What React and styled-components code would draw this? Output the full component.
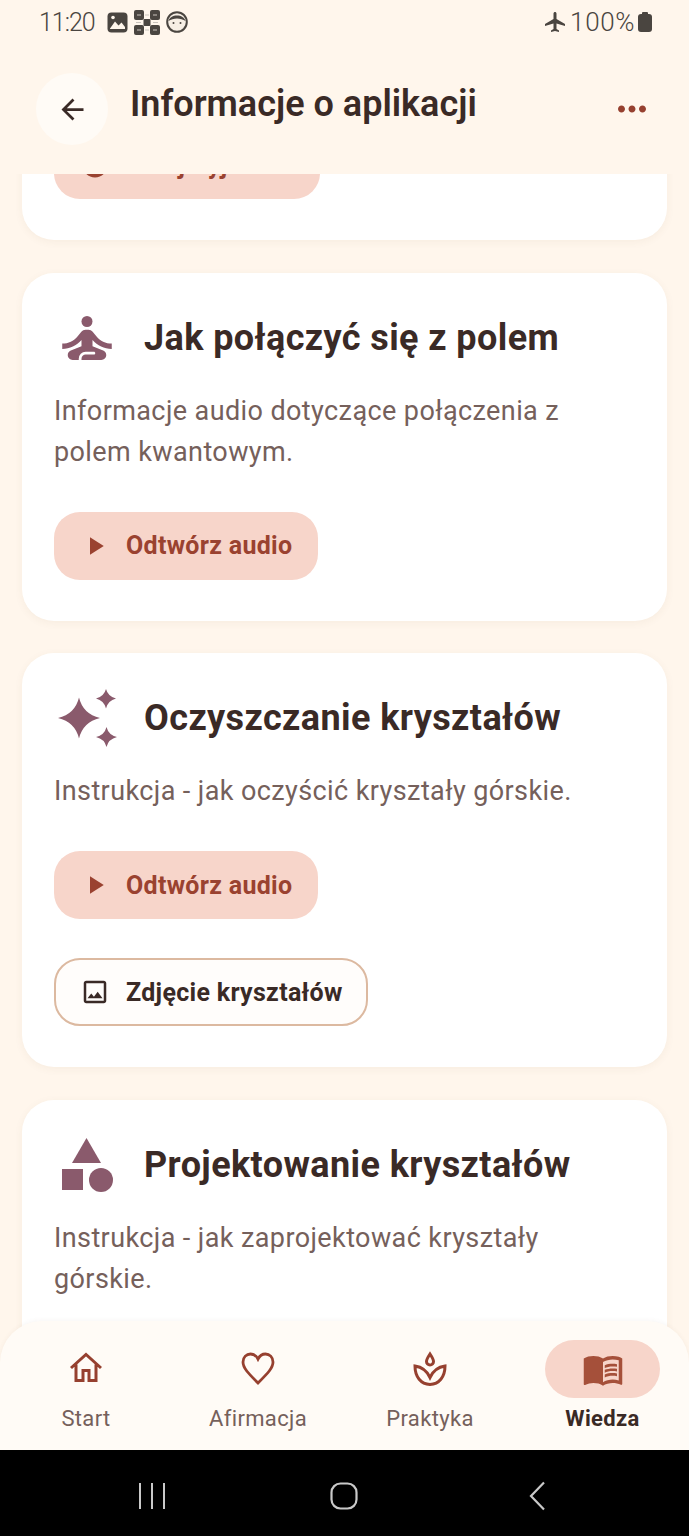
import React from "react";
import styled, { createGlobalStyle } from "styled-components";
import {
  MdArrowBack,
  MdMoreHoriz,
  MdPlayArrow,
  MdOutlineImage,
  MdSelfImprovement,
  MdMenuBook,
  MdLocalAirport,
  MdPlayCircle,
} from "react-icons/md";

const GlobalStyle = createGlobalStyle`
  html, body {
    margin: 0;
    padding: 0;
    background: #fff6ec;
    font-family: Roboto, "Liberation Sans", sans-serif;
  }
  * {
    box-sizing: border-box;
  }
`;

const Screen = styled.div`
  width: 689px;
  height: 1536px;
  display: flex;
  flex-direction: column;
  overflow: hidden;
  background: #fff6ec;
`;

const StatusBar = styled.div`
  height: 44px;
  flex: none;
  padding: 0 37px 0 39px;
  display: flex;
  align-items: center;
  justify-content: space-between;
  color: #4a4540;
  font-size: 25px;
  font-weight: 300;
`;

const StatusGroup = styled.div`
  display: flex;
  align-items: center;
  gap: ${(props) => props.$gap || 6}px;
`;

const Clock = styled.span`
  letter-spacing: -1px;
  margin-right: 6px;
`;

const Percent = styled.span`
  font-size: 26px;
  letter-spacing: 0.6px;
`;

const AppBar = styled.div`
  height: 130px;
  flex: none;
  padding: 29px 36px 0;
  display: flex;
  align-items: flex-start;
`;

const BackButton = styled.div`
  width: 72px;
  height: 72px;
  border-radius: 50%;
  background: #fffbf6;
  display: flex;
  align-items: center;
  justify-content: center;
  color: #3a2a26;
  font-size: 33px;
`;

const PageTitle = styled.div`
  margin: 8px 0 0 22px;
  flex: 1;
  font-size: 36px;
  line-height: 46px;
  font-weight: 600;
  color: #3a2a26;
`;

const MoreButton = styled.div`
  margin: 15px 0 0;
  display: flex;
  color: #96402f;
  font-size: 42px;
`;

const Feed = styled.div`
  flex: 1;
  min-height: 0;
  overflow: hidden;
`;

const CardList = styled.div`
  margin-top: -75px;
  padding: 0 22px;
  display: flex;
  flex-direction: column;
  gap: 32.5px;
`;

const Card = styled.div`
  background: #fff;
  border-radius: 32px;
  padding: 32px 32px ${(props) => props.$bottom || 41}px;
  box-shadow: 0 2px 8px rgba(120, 80, 50, 0.06);
  display: flex;
  flex-direction: column;
  align-items: flex-start;
`;

const CardHead = styled.div`
  display: flex;
  align-items: center;
  gap: 24px;
  height: 66px;
`;

const CardIcon = styled.div`
  width: 66px;
  height: 66px;
  display: flex;
  align-items: center;
  justify-content: center;
  color: #8a5a6c;
  font-size: 66px;
`;

const CardTitle = styled.div`
  font-size: 36px;
  font-weight: 700;
  letter-spacing: 0.4px;
  color: #3a2a26;
`;

const CardText = styled.div`
  margin-top: 20px;
  font-size: 27px;
  line-height: 41px;
  letter-spacing: 0.4px;
  color: #75605b;
`;

const ActionButton = styled.div`
  margin-top: ${(props) => props.$top ?? 39}px;
  height: 68px;
  width: ${(props) => props.$width}px;
  padding-left: ${(props) => (props.$outlined ? 24 : 26)}px;
  display: flex;
  align-items: center;
  gap: 16px;
  border-radius: 26px;
  font-size: 25px;
  font-weight: 700;
  letter-spacing: 0.3px;
  color: ${(props) => (props.$outlined ? "#3a2a26" : "#9a4230")};
  background: ${(props) => (props.$outlined ? "#fffdfb" : "#f7d5ca")};
  border: ${(props) => (props.$outlined ? "2px solid #dcb9a0" : "none")};
`;

const ButtonIcon = styled.span`
  display: flex;
  font-size: 30px;
`;

const BottomNav = styled.div`
  position: relative;
  z-index: 1;
  flex: none;
  height: 129px;
  margin-top: -42px;
  padding-top: 19px;
  border-radius: 42px 42px 0 0;
  background: #fffbf6;
  box-shadow: 0 -1px 4px rgba(120, 80, 50, 0.05);
  display: grid;
  grid-template-columns: 172px 172px 172px 1fr;
`;

const NavItem = styled.div`
  display: flex;
  flex-direction: column;
  align-items: center;
  font-size: 22px;
  letter-spacing: 0.35px;
  font-weight: ${(props) => (props.$active ? 700 : 400)};
  color: ${(props) => (props.$active ? "#3a2a26" : "#75605b")};
`;

const NavPill = styled.div`
  width: 115px;
  height: 58px;
  border-radius: 29px;
  display: flex;
  align-items: center;
  justify-content: center;
  color: ${(props) => (props.$active ? "#a5503a" : "#96402f")};
  font-size: 42px;
  background: ${(props) => (props.$active ? "#f7d5ca" : "transparent")};
`;

const NavLabel = styled.div`
  margin-top: 8px;
  line-height: 26px;
`;

const SystemBar = styled.div`
  height: 86px;
  flex: none;
  background: #000;
  display: grid;
  grid-template-columns: 1fr 1fr 1fr;
  align-items: center;
  justify-items: center;
  padding: 5px 56px 0;
`;

const SparkleIcon = () => (
  <svg width="59" height="58" viewBox="0 0 59 58" fill="currentColor">
    <path d="M21 8.500 Q25 25 42 29 Q25 33 21 49.500 Q17 33 0 29 Q17 25 21 8.500Z" />
    <path d="M48 0 Q50 7.500 58 9.500 Q50 11.500 48 19.500 Q46 11.500 38 9.500 Q46 7.500 48 0Z" />
    <path d="M48.500 38 Q50.500 46 59 48 Q50.500 50 48.500 58 Q46.500 50 38 48 Q46.500 46 48.500 38Z" />
  </svg>
);

const ShapesIcon = () => (
  <svg width="51" height="54" viewBox="0 0 51 54" fill="currentColor">
    <path d="M24.500 0 L39 25 H10Z" />
    <rect x="0" y="31" width="21" height="21" />
    <circle cx="39" cy="42" r="12" />
  </svg>
);

const HomeIcon = () => (
  <svg width="34" height="34" viewBox="0 0 34 34" fill="none" stroke="currentColor" strokeWidth="3">
    <path d="M2 16 L17 2.500 L32 16 M7 12.500 V28.500 H14 V18.500 H20 V28.500 H27 V12.500" />
  </svg>
);

const HeartIcon = () => (
  <svg width="36" height="36" viewBox="0 0 36 36" fill="none" stroke="currentColor" strokeWidth="2.800">
    <path d="M18 32 C8 22 3 17 3 11 C3 6 6.500 3 10.500 3 C14 3 16.500 5 18 8 C19.500 5 22 3 25.500 3 C29.500 3 33 6 33 11 C33 17 28 22 18 32Z" />
  </svg>
);

const SpaIcon = () => (
  <svg width="36" height="36" viewBox="0 0 36 36" fill="none" stroke="currentColor" strokeWidth="3">
    <path d="M18 3 C20 6 21.500 8.500 21.500 10.500 A3.500 3.500 0 0 1 14.500 10.500 C14.500 8.500 16 6 18 3Z" />
    <path d="M18 33.500 C9 33 3 26 3 15 C10 16 15 20 18 26.500 C21 20 26 16 33 15 C33 26 27 33 18 33.500Z" />
  </svg>
);

const ImageGlyph = () => (
  <svg width="21" height="21" viewBox="0 0 21 21">
    <rect x="0.500" y="0.500" width="20" height="20" rx="4" fill="#4a4540" />
    <path d="M3 16.500 L8 9.500 L11.500 13.500 L14.500 10.500 L18 15 V17 H3Z" fill="#fff6ec" />
    <circle cx="6" cy="5.500" r="1.800" fill="#fff6ec" />
  </svg>
);

const CalcGlyph = () => (
  <svg width="26" height="25" viewBox="0 0 26 25">
    <rect x="0" y="0" width="10" height="10" rx="2" fill="#4a4540" />
    <rect x="16" y="0" width="10" height="10" rx="2" fill="#4a4540" />
    <rect x="0" y="15" width="10" height="10" rx="2" fill="#4a4540" />
    <rect x="16" y="15" width="10" height="10" rx="2" fill="#4a4540" />
    <rect x="9.500" y="9" width="7" height="7" rx="1" fill="#4a4540" />
    <path d="M3 5 H7 M19 5 H23 M3 20 H7 M19 20 H23 M11 5 H15 M11 20 H15 M2 12.500 H7 M19 12.500 H24" stroke="#c9c3bc" strokeWidth="1.200" />
  </svg>
);

const FaceGlyph = () => (
  <svg width="22" height="22" viewBox="0 0 22 22">
    <circle cx="11" cy="11" r="9.800" fill="#f6eee4" stroke="#4a4540" strokeWidth="2" />
    <path d="M2.500 10 C4 2.500 18 2.500 19.500 10 C15 6.500 7 6.500 2.500 10Z" fill="#4a4540" />
    <circle cx="7.500" cy="12" r="1" fill="#4a4540" />
    <circle cx="14.500" cy="12" r="1" fill="#4a4540" />
  </svg>
);

const BatteryGlyph = () => (
  <svg width="14" height="20" viewBox="0 0 14 20" fill="#4a4540">
    <rect x="4" y="0" width="6" height="3" rx="1" />
    <rect x="0" y="2" width="14" height="18" rx="3" />
  </svg>
);

const SquircleIcon = () => (
  <svg width="28" height="28" viewBox="0 0 28 28" fill="none" stroke="#c9c9c9" strokeWidth="2.200">
    <rect x="1.500" y="1.500" width="25" height="25" rx="9" />
  </svg>
);

const RecentsIcon = () => (
  <svg width="28" height="28" viewBox="0 0 28 28" stroke="#c9c9c9" strokeWidth="2">
    <path d="M2 1 V27 M14 1 V27 M26 1 V27" />
  </svg>
);

const ChevronIcon = () => (
  <svg width="18" height="30" viewBox="0 0 18 30" fill="none" stroke="#c9c9c9" strokeWidth="2.200">
    <path d="M16 1.500 L3 15 L16 28.500" />
  </svg>
);

const PlayAudio = () => (
  <ActionButton $width={264}>
    <ButtonIcon>
      <MdPlayArrow />
    </ButtonIcon>
    Odtwórz audio
  </ActionButton>
);

const navItems = [
  { label: "Start", icon: <HomeIcon /> },
  { label: "Afirmacja", icon: <HeartIcon /> },
  { label: "Praktyka", icon: <SpaIcon /> },
  { label: "Wiedza", icon: <MdMenuBook />, active: true },
];

export default function App() {
  return (
    <Screen>
      <GlobalStyle />
      <StatusBar>
        <StatusGroup>
          <Clock>11:20</Clock>
          <ImageGlyph />
          <CalcGlyph />
          <FaceGlyph />
        </StatusGroup>
        <StatusGroup $gap={3}>
          <MdLocalAirport size={24} />
          <Percent>100%</Percent>
          <BatteryGlyph />
        </StatusGroup>
      </StatusBar>
      <AppBar>
        <BackButton>
          <MdArrowBack />
        </BackButton>
        <PageTitle>Informacje o aplikacji</PageTitle>
        <MoreButton>
          <MdMoreHoriz />
        </MoreButton>
      </AppBar>
      <Feed>
        <CardList>
          <Card>
            <ActionButton $width={266} $top={0}>
              <ButtonIcon>
                <MdPlayCircle />
              </ButtonIcon>
              Przejrzyj tekst
            </ActionButton>
          </Card>
          <Card>
            <CardHead>
              <CardIcon>
                <MdSelfImprovement />
              </CardIcon>
              <CardTitle>Jak połączyć się z polem</CardTitle>
            </CardHead>
            <CardText>
              Informacje audio dotyczące połączenia z
              <br />
              polem kwantowym.
            </CardText>
            <PlayAudio />
          </Card>
          <Card>
            <CardHead>
              <CardIcon>
                <SparkleIcon />
              </CardIcon>
              <CardTitle>Oczyszczanie kryształów</CardTitle>
            </CardHead>
            <CardText>Instrukcja - jak oczyścić kryształy górskie.</CardText>
            <PlayAudio />
            <ActionButton $outlined $width={314}>
              <ButtonIcon>
                <MdOutlineImage />
              </ButtonIcon>
              Zdjęcie kryształów
            </ActionButton>
          </Card>
          <Card $bottom={120}>
            <CardHead>
              <CardIcon>
                <ShapesIcon />
              </CardIcon>
              <CardTitle>Projektowanie kryształów</CardTitle>
            </CardHead>
            <CardText>
              Instrukcja - jak zaprojektować kryształy
              <br />
              górskie.
            </CardText>
          </Card>
        </CardList>
      </Feed>
      <BottomNav>
        {navItems.map((item) => (
          <NavItem key={item.label} $active={item.active}>
            <NavPill $active={item.active}>{item.icon}</NavPill>
            <NavLabel>{item.label}</NavLabel>
          </NavItem>
        ))}
      </BottomNav>
      <SystemBar>
        <RecentsIcon />
        <SquircleIcon />
        <ChevronIcon />
      </SystemBar>
    </Screen>
  );
}
